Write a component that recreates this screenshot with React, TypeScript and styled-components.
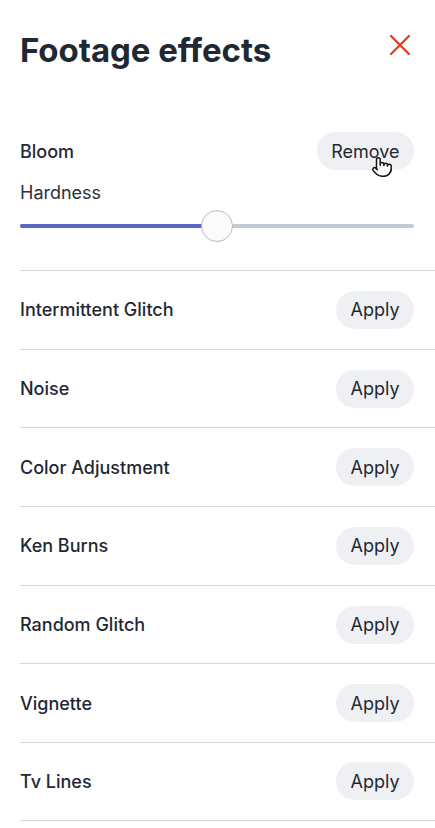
import React from "react";
import styled, { createGlobalStyle } from "styled-components";
import { Pointer } from "lucide-react";

const GlobalStyle = createGlobalStyle`
   html, body {
      margin: 0;
      padding: 0;
      background: #ffffff;
   }
   body {
      font-family: Inter, "Noto Sans", "Liberation Sans", sans-serif;
      color: #1f2933;
      -webkit-font-smoothing: antialiased;
   }
`;

const effects = [
   "Intermittent Glitch",
   "Noise",
   "Color Adjustment",
   "Ken Burns",
   "Random Glitch",
   "Vignette",
   "Tv Lines",
];

function App() {
   const hardness = 50;

   return (
      <Panel>
         <GlobalStyle />
         <Header>
            <Title>Footage effects</Title>
            <CloseButton aria-label="close">
               <svg width="22" height="22" viewBox="0 0 22 22">
                  <path d="M2 2 L20 20 M20 2 L2 20" stroke="#e2391b" strokeWidth="2.2" strokeLinecap="round" />
               </svg>
            </CloseButton>
         </Header>

         <ActiveEffect>
            <EffectRow>
               <EffectName>Bloom</EffectName>
               <PillButton>
                  Remove
                  <Cursor>
                     <Pointer size={22} strokeWidth={1.6} color="#111" fill="#fff" />
                  </Cursor>
               </PillButton>
            </EffectRow>
            <SliderLabel>Hardness</SliderLabel>
            <Slider>
               <Track />
               <Fill style={{ width: `${hardness}%` }} />
               <Thumb style={{ left: `${hardness}%` }} />
            </Slider>
         </ActiveEffect>

         <List>
            {effects.map((name) => (
               <ListRow key={name}>
                  <EffectName>{name}</EffectName>
                  <PillButton>Apply</PillButton>
               </ListRow>
            ))}
         </List>
      </Panel>
   );
}

export default App;

const Panel = styled.div`
   width: 435px;
   min-height: 828px;
   display: flex;
   flex-direction: column;
   padding-left: 20px;
   box-sizing: border-box;
`;

const Header = styled.div`
   display: flex;
   justify-content: space-between;
   align-items: center;
   height: 100px;
   padding-right: 21px;
   box-sizing: border-box;
`;

const Title = styled.h1`
   margin: 0;
   font-size: 33px;
   font-weight: 700;
   letter-spacing: -0.05px;
   color: #1f2933;
`;

const CloseButton = styled.button`
   border: 0;
   background: none;
   padding: 0;
   width: 24px;
   height: 24px;
   display: flex;
   align-items: center;
   justify-content: center;
   margin-right: 2px;
   margin-top: -10px;
   cursor: pointer;
`;

const ActiveEffect = styled.div`
   display: flex;
   flex-direction: column;
   padding: 32px 21px 0 0;
   height: 170px;
   box-sizing: border-box;
`;

const EffectRow = styled.div`
   display: flex;
   justify-content: space-between;
   align-items: center;
`;

const EffectName = styled.span`
   font-size: 18px;
   font-weight: 500;
   color: #1f2933;
`;

const PillButton = styled.button`
   position: relative;
   height: 38px;
   padding: 0 14.5px;
   border: 0;
   border-radius: 19px;
   background: #eff0f4;
   font-family: inherit;
   font-size: 18px;
   font-weight: 400;
   color: #1f2933;
   cursor: pointer;
`;

const Cursor = styled.span`
   position: absolute;
   left: 54px;
   top: 24px;
   display: flex;
   pointer-events: none;
`;

const SliderLabel = styled.div`
   margin-top: 12px;
   font-size: 18px;
   font-weight: 400;
   color: #2a323c;
`;

const Slider = styled.div`
   position: relative;
   height: 32px;
   margin-top: 7px;
`;

const Track = styled.div`
   position: absolute;
   left: 0;
   right: 0;
   top: 14px;
   height: 4px;
   border-radius: 2px;
   background: #c3cad5;
`;

const Fill = styled.div`
   position: absolute;
   left: 0;
   top: 14px;
   height: 4px;
   border-radius: 2px;
   background: #5866c4;
`;

const Thumb = styled.div`
   position: absolute;
   top: 0;
   width: 32px;
   height: 32px;
   margin-left: -16px;
   border-radius: 50%;
   background: #fbfbfc;
   border: 1px solid #b9bcc2;
   box-sizing: border-box;
`;

const List = styled.div`
   display: flex;
   flex-direction: column;
`;

const ListRow = styled.div`
   display: flex;
   justify-content: space-between;
   align-items: center;
   height: 78.7px;
   padding-right: 21px;
   border-top: 1px solid #d3d5d9;
   box-sizing: border-box;

   &:last-child {
      border-bottom: 1px solid #d3d5d9;
   }
`;
